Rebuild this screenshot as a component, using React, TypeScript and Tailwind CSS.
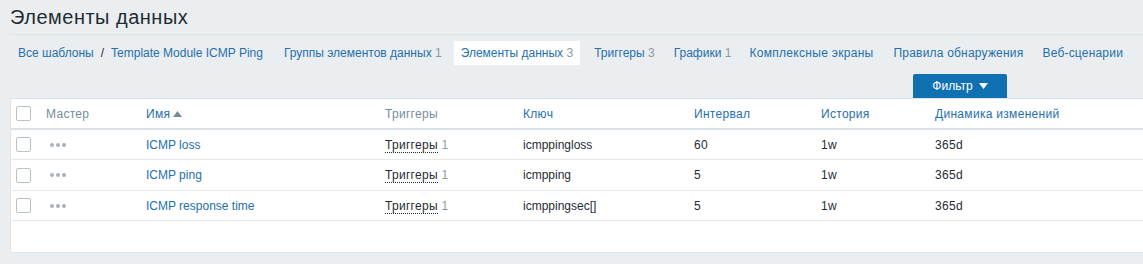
import React from "react";

const blue = "text-[#2470ac]";
const grey = "text-[#8f9aa0]";

function Cb() {
  return <div className="w-[15px] h-[15px] rounded-[2px] border border-[#b8c2c8] bg-white" />;
}

const rows = [
  { name: "ICMP loss", key: "icmppingloss", interval: "60", h: "h-[30px]" },
  { name: "ICMP ping", key: "icmpping", interval: "5", h: "h-[31px]" },
  { name: "ICMP response time", key: "icmppingsec[]", interval: "5", h: "h-[30px]" },
];

const grid = "grid grid-cols-[30px_100px_239px_138px_171px_127px_114px_1fr] items-center";
const nav = `shrink-0 whitespace-nowrap px-[7px] ${blue}`;

export default function App() {
  return (
    <div
      className="w-[1143px] h-[264px] bg-[#ebeef0] overflow-hidden text-[12px] text-[#1f2c33]"
      style={{ fontFamily: "Arial, 'Liberation Sans', sans-serif" }}
    >
      <div className="ml-[10px] h-[35px] border-b border-[#dfe4e7] flex items-end">
        <h1 className="text-[20px] leading-none pb-[7px] text-[#1f2c33] tracking-[0.5px]">Элементы данных</h1>
      </div>
      <div className="mt-[6px] h-[24px] flex items-center ml-[11px] whitespace-nowrap">
        <span className={nav}>Все шаблоны</span>
        <span className="shrink-0 text-[#1f2c33]">/</span>
        <span className={nav}>Template Module ICMP Ping</span>
        <span className={`ml-[7px] ${nav}`}>
          Группы элементов данных <span className={grey}>1</span>
        </span>
        <span className={`ml-[5px] h-[24px] flex items-center bg-white ${nav}`}>
          Элементы данных&nbsp;<span className={grey}>3</span>
        </span>
        <span className={`ml-[7px] ${nav}`}>
          Триггеры <span className={grey}>3</span>
        </span>
        <span className={`ml-[5px] ${nav}`}>
          Графики <span className={grey}>1</span>
        </span>
        <span className={`ml-[4px] tracking-[0.3px] ${nav}`}>Комплексные экраны</span>
        <span className={`ml-[6px] tracking-[0.2px] ${nav}`}>Правила обнаружения</span>
        <span className={`ml-[5px] tracking-[0.2px] ${nav}`}>Веб-сценарии</span>
      </div>
      <div className="mt-[9px] flex">
        <div className="ml-[913px] w-[94px] h-[24px] bg-[#0f71b2] text-white flex items-center justify-center gap-[6px] rounded-t-[2px]">
          <span>Фильтр</span>
          <svg width="9" height="6" viewBox="0 0 9 6">
            <path d="M0 0 L9 0 L4.5 6 Z" fill="white" />
          </svg>
        </div>
      </div>
      <div className="ml-[10px] h-[155px] bg-white border border-[#dfe4e7] border-r-0 tracking-[0.3px]">
        <div className={`${grid} h-[31px] border-b-2 border-[#dbe1e4]`}>
          <div className="pl-[5px]"><Cb /></div>
          <div className="pl-[5px] text-[#768d99]">Мастер</div>
          <div className={`pl-[5px] ${blue} flex items-center gap-[3px]`}>
            Имя
            <svg width="9" height="6" viewBox="0 0 9 6"><path d="M0 6 L9 6 L4.5 0 Z" fill="#768d99" /></svg>
          </div>
          <div className="pl-[5px] text-[#768d99]">Триггеры</div>
          <div className={`pl-[5px] ${blue}`}>Ключ</div>
          <div className={`pl-[5px] ${blue}`}>Интервал</div>
          <div className={`pl-[5px] ${blue}`}>История</div>
          <div className={`pl-[5px] ${blue}`}>Динамика изменений</div>
        </div>
        {rows.map((r) => (
          <div key={r.name} className={`${grid} ${r.h} border-b border-[#e5e9eb]`}>
            <div className="pl-[5px]"><Cb /></div>
            <div className="pl-[9px] flex gap-[2px]">
              <span className="w-[4px] h-[4px] rounded-full bg-[#a9b1b6]" />
              <span className="w-[4px] h-[4px] rounded-full bg-[#a9b1b6]" />
              <span className="w-[4px] h-[4px] rounded-full bg-[#a9b1b6]" />
            </div>
            <div className={`pl-[5px] ${blue} tracking-normal`}>{r.name}</div>
            <div className="pl-[5px]">
              <span className="border-b border-dotted border-[#1f2c33]">Триггеры</span>{" "}
              <span className={grey}>1</span>
            </div>
            <div className="pl-[5px] tracking-normal">{r.key}</div>
            <div className="pl-[5px]">{r.interval}</div>
            <div className="pl-[5px]">1w</div>
            <div className="pl-[5px]">365d</div>
          </div>
        ))}
      </div>
    </div>
  );
}
